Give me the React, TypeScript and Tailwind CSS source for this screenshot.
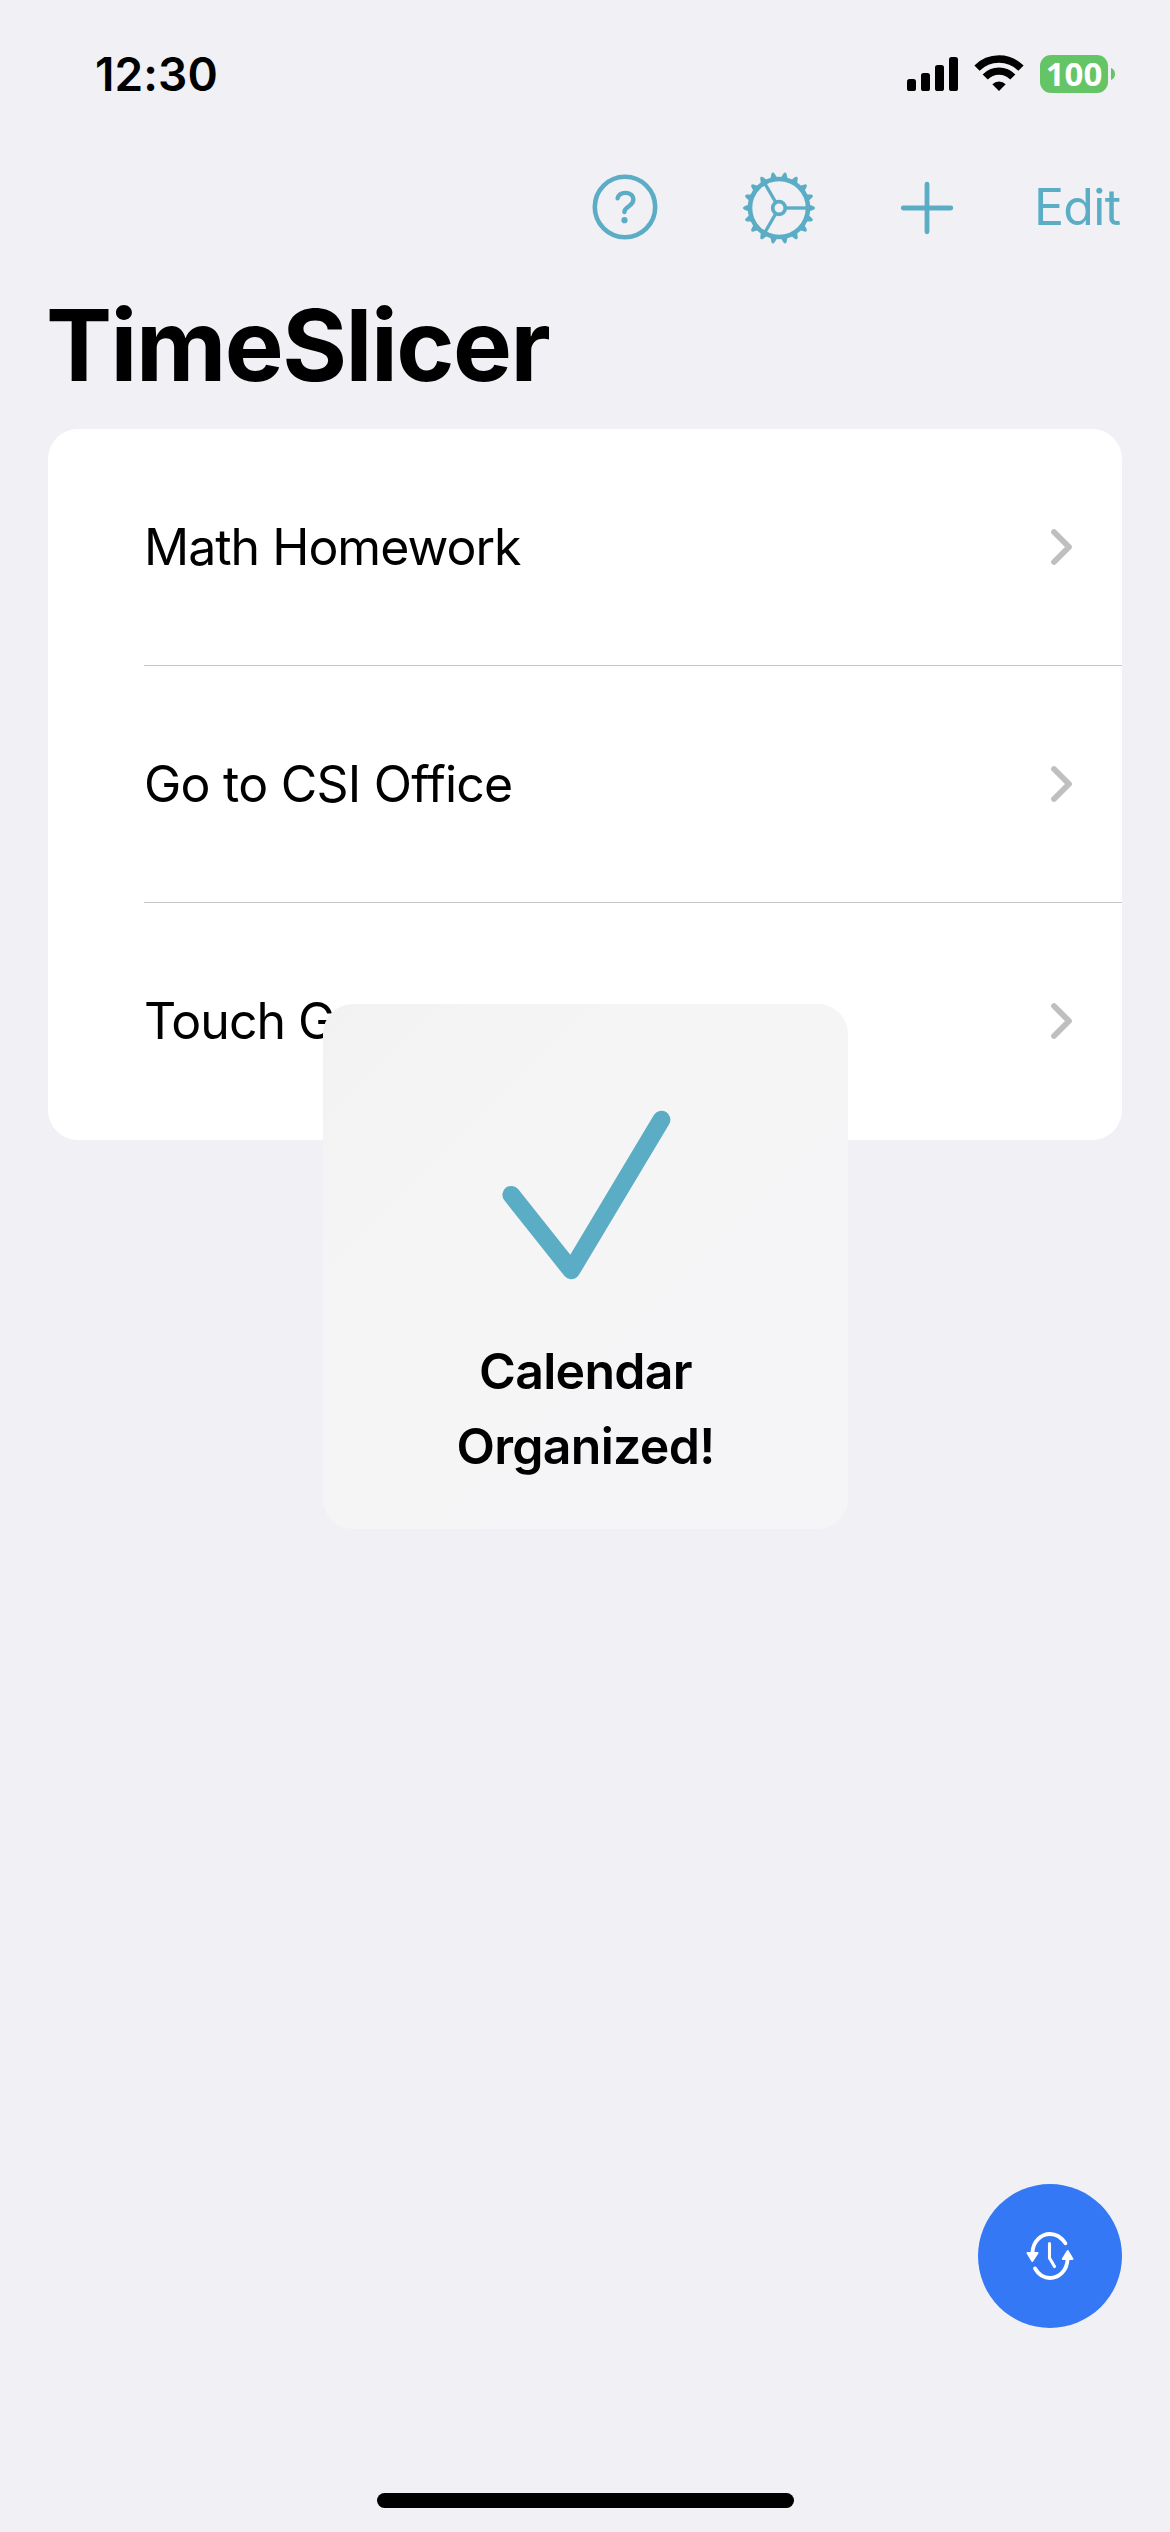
import React from "react";

const TEETH = Array.from({ length: 18 }, (_, i) => i * 20);
const TASKS = [
  { title: "Math Homework", tracking: "tracking-[-1px]" },
  { title: "Go to CSI Office", tracking: "tracking-[-0.75px]" },
  { title: "Touch Grass", tracking: "tracking-[-1px]" },
];

function StatusBar() {
  return (
    <header className="flex h-[150px] items-start justify-between pl-[95px] pr-[54px] text-black">
      <span className="mt-[46px] text-[46px] leading-[56px] font-semibold tracking-[0.1px]">12:30</span>
      <div className="mt-[55px] flex items-start">
        <svg width="52" height="38" viewBox="0 0 52 38" fill="currentColor">
          <rect x="0" y="24" width="9" height="12" rx="2.6" />
          <rect x="14" y="18" width="9" height="18" rx="2.6" />
          <rect x="28" y="10" width="9" height="26" rx="2.6" />
          <rect x="42" y="2" width="9" height="34" rx="2.6" />
        </svg>
        <svg className="ml-[15px]" width="50" height="38" viewBox="0 0 50 38" fill="none" stroke="currentColor">
          <path d="M3 13.2 A31 31 0 0 1 47 13.2" strokeWidth="7.4" />
          <path d="M11.2 22 A19.2 19.2 0 0 1 38.8 22" strokeWidth="7.2" />
          <path d="M18.3 29.2 A9.8 9.8 0 0 1 31.7 29.2 L25 36 Z" fill="currentColor" stroke="none" />
        </svg>
        <div className="ml-[16px] flex h-[38px] w-[68px] items-center justify-center rounded-[11px] bg-[#65c466] font-['Open_Sans',sans-serif] text-[33px] leading-[38px] font-bold text-white">
          100
        </div>
        <svg className="ml-[3px] mt-[13px]" width="5" height="12" viewBox="0 0 5 12" fill="#65c466">
          <path d="M0 0 Q4 1.5 4 6 Q4 10.500 0 12 Z" />
        </svg>
      </div>
    </header>
  );
}

function HelpIcon() {
  return (
    <svg className="mb-[2px]" width="66" height="66" viewBox="0 0 66 66" fill="none" stroke="currentColor">
      <circle cx="33" cy="33" r="30.2" strokeWidth="4.6" />
      <path d="M25.600 24.300 C26.600 20.600 29.400 18.900 33.300 18.900 C38 18.900 41.300 21.500 41.300 25.600 C41.300 29 39.400 30.700 36.600 32.500 C33.600 34.400 32.400 35.900 32.400 38" strokeWidth="4.400" strokeLinecap="round" />
      <circle cx="32.500" cy="46.200" r="3.1" fill="currentColor" stroke="none" />
    </svg>
  );
}

function GearIcon() {
  return (
    <svg width="74" height="74" viewBox="-37 -37 74 74" fill="none" stroke="currentColor">
      <circle r="29" strokeWidth="4.600" />
      <circle r="6.300" strokeWidth="3.700" />
      {[0, 120, 240].map((a) => (
        <path key={a} d="M7.500 0 H28" strokeWidth="3.400" transform={`rotate(${a})`} />
      ))}
      {TEETH.map((a) => (
        <path
          key={a}
          d="M30 -3.500 L31.500 -2.900 L34.500 -1.700 Q36 -1 36 0 Q36 1 34.500 1.700 L31.500 2.900 L30 3.500 Z"
          fill="currentColor"
          stroke="none"
          transform={`rotate(${a})`}
        />
      ))}
    </svg>
  );
}

function Toolbar() {
  return (
    <nav className="flex h-[115px] items-center justify-end pr-[48px] text-[#5aadc5]">
      <HelpIcon />
      <div className="ml-[84px]"><GearIcon /></div>
      <svg className="ml-[84px]" width="54" height="54" viewBox="-27 -27 54 54" fill="none" stroke="currentColor" strokeWidth="4.800" strokeLinecap="round">
        <path d="M-23.800 0 H23.800 M0 -23.800 V23.800" />
      </svg>
      <span className="mb-[2px] ml-[80px] w-[88px] text-[50px] leading-[60px] tracking-[-0.7px]">Edit</span>
    </nav>
  );
}

function TaskRow({ title, tracking, last }: { title: string; tracking: string; last: boolean }) {
  return (
    <li className="flex h-[237px] pl-[96px]">
      <div className={last ? "flex flex-1 items-center justify-between pb-[2px] pr-[48px]" : "flex flex-1 items-center justify-between border-b border-[#c6c6c8] pr-[48px]"}>
        <span className={`text-[50px] leading-[60px] text-black [font-feature-settings:'calt'_0,'liga'_0] ${tracking}`}>{title}</span>
        <svg width="24" height="40" viewBox="0 0 24 40" fill="none" stroke="#bfbfbf" strokeWidth="5.800" strokeLinecap="round" strokeLinejoin="round">
          <path d="M4 5 L19 20 L4 35" />
        </svg>
      </div>
    </li>
  );
}

function Toast() {
  return (
    <div className="absolute left-[323px] top-[1004px] flex h-[525px] w-[525px] flex-col items-center rounded-[30px] bg-linear-to-br from-[#f2f2f3] via-[#f5f5f6] via-30% to-[#f5f5f8]">
      <svg className="mt-[97px]" width="180" height="180" viewBox="0 0 180 180" fill="none" stroke="#5aadc5" strokeWidth="17.800" strokeLinecap="round" strokeLinejoin="round">
        <path d="M15.300 93.800 L75.300 169.300 L165.500 18.600" />
      </svg>
      <p className="mt-[53px] text-center text-[50px] leading-[75px] font-semibold tracking-[-0.7px] text-black">
        Calendar<br />Organized!
      </p>
    </div>
  );
}

function SyncClockIcon() {
  return (
    <svg width="50" height="52" viewBox="0 0 50 52" fill="none" stroke="white" strokeWidth="3.800" strokeLinecap="round" strokeLinejoin="round">
      <path d="M7.500 22 C8.200 11.500 15.800 4 25 4 C31 4 36.500 7.500 40.400 13.300" />
      <path d="M42.500 30 C41.800 40.500 34.200 48 25 48 C19 48 13.500 44.500 10 38.500" />
      <path d="M24.500 13.500 V28 L29.500 36.500" strokeWidth="3.100" />
      <path d="M2.500 23 H12.500 L7.300 31 Z" fill="white" strokeWidth="2" />
      <path d="M37.800 29 H47.500 L42.700 21 Z" fill="white" strokeWidth="2" />
    </svg>
  );
}

export default function App() {
  return (
    <div className="relative flex h-[2532px] w-[1170px] flex-col overflow-hidden bg-[#f1f0f5] font-['Inter',sans-serif]">
      <StatusBar />
      <Toolbar />
      <h1 className="ml-[46px] mt-[20px] text-[99px] leading-[120px] font-bold tracking-[-1.5px] text-black">TimeSlicer</h1>
      <ul className="mx-[48px] mt-[24px] overflow-hidden rounded-[30px] bg-white">
        {TASKS.map((task, i) => (
          <TaskRow key={task.title} title={task.title} tracking={task.tracking} last={i === TASKS.length - 1} />
        ))}
      </ul>
      <button className="mb-[165px] mr-[48px] mt-auto flex size-[144px] items-center justify-center self-end rounded-full bg-[#3478f6]">
        <SyncClockIcon />
      </button>
      <div className="mx-auto mb-[24px] h-[15px] w-[417px] rounded-full bg-black" />
      <Toast />
    </div>
  );
}
